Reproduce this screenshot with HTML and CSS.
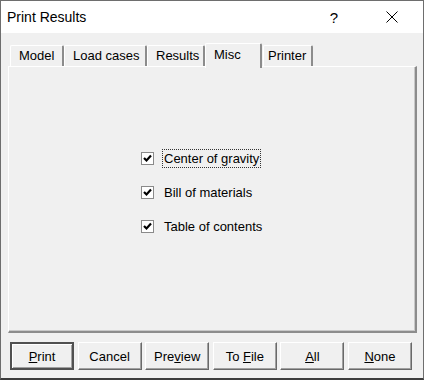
FILE: index.html
```html
<!DOCTYPE html>
<html lang="en">
<head>
  <meta charset="UTF-8" />
  <title>Print Results</title>
  <link rel="stylesheet" href="styles.css">
</head>
<body>
  <div class="window">
    <div class="titlebar">
      <span class="title">Print Results</span>
      <span class="help">?</span>
      <span class="close">
        <svg width="12" height="12" viewBox="0 0 12 12">
          <path d="M0.5 0.5 L11.5 11.5 M11.5 0.5 L0.5 11.5" stroke="#000" stroke-width="1" fill="none"/>
        </svg>
      </span>
    </div>

    <div class="client">
      <div class="tabs">
        <div class="tab tab-model">Model</div>
        <div class="tab tab-loads">Load cases</div>
        <div class="tab tab-results">Results</div>
        <div class="tab tab-misc active">Misc</div>
        <div class="tab tab-printer">Printer</div>
      </div>

      <div class="panel">
        <label class="check">
          <span class="box"><svg width="9" height="9" viewBox="0 0 9 9"><path d="M1 4 L3.5 6.5 L8 1.5" stroke="#000" stroke-width="2.2" fill="none"/></svg></span>
          <span class="label focused">Center of gravity</span>
        </label>
        <label class="check">
          <span class="box"><svg width="9" height="9" viewBox="0 0 9 9"><path d="M1 4 L3.5 6.5 L8 1.5" stroke="#000" stroke-width="2.2" fill="none"/></svg></span>
          <span class="label">Bill of materials</span>
        </label>
        <label class="check">
          <span class="box"><svg width="9" height="9" viewBox="0 0 9 9"><path d="M1 4 L3.5 6.5 L8 1.5" stroke="#000" stroke-width="2.2" fill="none"/></svg></span>
          <span class="label">Table of contents</span>
        </label>
      </div>

      <div class="buttons">
        <button class="btn default"><u>P</u>rint</button>
        <button class="btn">Cancel</button>
        <button class="btn">Pre<u>v</u>iew</button>
        <button class="btn">To <u>F</u>ile</button>
        <button class="btn"><u>A</u>ll</button>
        <button class="btn"><u>N</u>one</button>
      </div>
    </div>
  </div>
</body>
</html>
```

FILE: styles.css
```css
body {
  margin: 0;
  font-family: "Liberation Sans", Arial, sans-serif;
  font-size: 13px;
  color: #000;
  background: #f0f0f0;
}

.window {
  width: 424px;
  height: 380px;
  box-sizing: border-box;
  border: 1px solid #6e6e6e;
  border-bottom: 2px solid #3c3c3c;
  display: flex;
  flex-direction: column;
  background: #f0f0f0;
}

.titlebar {
  height: 32px;
  background: #fff;
  display: flex;
  align-items: center;
  flex-shrink: 0;
}

.title {
  font-size: 14px;
  margin-left: 6px;
  flex: 1;
}

.help {
  font-size: 15px;
  width: 46px;
  text-align: center;
  margin-right: 12px;
}

.close {
  width: 46px;
  display: flex;
  justify-content: center;
  margin-right: 8px;
}

.client {
  flex: 1;
  padding: 10px 6px 0 7px;
}

.tabs {
  display: flex;
  align-items: flex-end;
  height: 23px;
  padding-left: 2px;
  position: relative;
  z-index: 1;
}

.tab {
  height: 21px;
  box-sizing: border-box;
  padding-left: 8px;
  line-height: 20px;
  border-top: 1px solid #fff;
  border-left: 1px solid #fff;
  border-right: 2px solid #8c8c8c;
  border-radius: 2px 2px 0 0;
  background: #f0f0f0;
}

.tab-model { width: 54px; }
.tab-loads { width: 83px; }
.tab-results { width: 58px; }
.tab-printer { width: 50px; padding-left: 4px; margin-left: 1px; }

.tab-misc {
  width: 57px;
}

.tab.active {
  height: 25px;
  margin-bottom: -2px;
  line-height: 22px;
  padding-bottom: 2px;
}

.panel {
  height: 267px;
  box-sizing: border-box;
  border-top: 1px solid #fff;
  border-left: 1px solid #fff;
  border-right: 2px solid #8c8c8c;
  border-bottom: 2px solid #8c8c8c;
  box-shadow: inset -1px -1px 0 #c8c8c8;
  padding: 82px 0 0 132px;
  display: flex;
  flex-direction: column;
  gap: 16px;
}

.check {
  display: flex;
  align-items: center;
  height: 18px;
}

.box {
  width: 13px;
  height: 13px;
  box-sizing: border-box;
  border: 1px solid #8a8a8a;
  background: #fff;
  display: flex;
  align-items: center;
  justify-content: center;
  margin-right: 8px;
}

.label {
  padding: 1px 1px;
  border: 1px dotted transparent;
}

.label.focused {
  border-color: #333;
}

.buttons {
  display: flex;
  justify-content: space-between;
  margin: 9px 5px 0 2px;
}

.btn {
  width: 64px;
  height: 28px;
  font-family: "Liberation Sans", Arial, sans-serif;
  font-size: 13px;
  background: #f0f0f0;
  border: 1px solid;
  border-color: #fff #696969 #696969 #fff;
  box-shadow: inset -1px -1px 0 #a0a0a0;
  padding: 0;
  color: #000;
}

.btn.default {
  border: 2px solid #505050;
  box-shadow: inset 1px 1px 0 #fff, inset -1px -1px 0 #a0a0a0;
}
```
